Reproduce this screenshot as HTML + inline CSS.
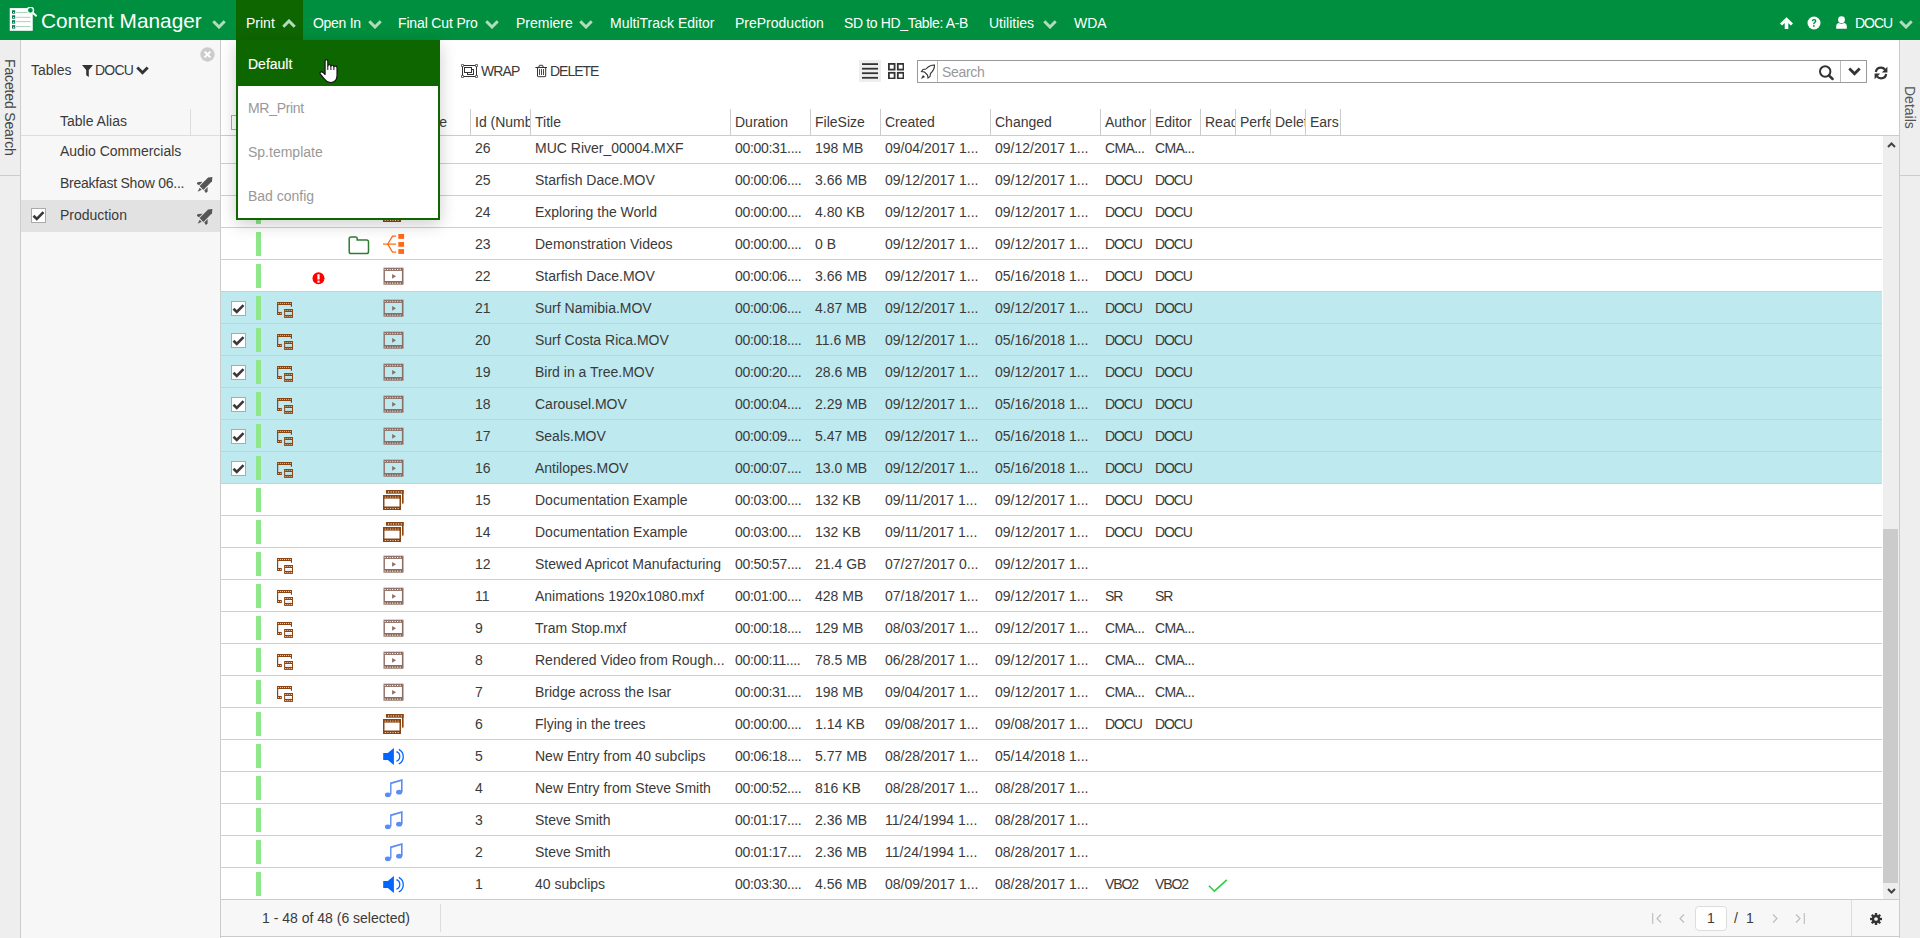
<!DOCTYPE html>
<html><head><meta charset="utf-8">
<style>
*{box-sizing:border-box;margin:0;padding:0}
html,body{width:1920px;height:938px;overflow:hidden;background:#fff}
body{font-family:"Liberation Sans",sans-serif;font-size:14px;color:#3a3a3a;position:relative}
.abs{position:absolute}
#nav{position:absolute;left:0;top:0;width:1920px;height:40px;background:#008f3e;color:#fff}
#nav .it{position:absolute;top:0;height:40px;line-height:46px;font-size:14px;white-space:nowrap}
#nav .chev{position:absolute;top:20px}
#printbg{position:absolute;left:236px;top:0;width:67px;height:40px;background:#0e6600}
#fstrip{position:absolute;left:0;top:40px;width:21px;height:898px;background:#eee;border-right:1px solid #ccc}
#fstrip .line{position:absolute;left:0;top:135px;width:20px;height:1px;background:#ccc}
.vtext{position:absolute;white-space:nowrap;transform-origin:0 0;transform:rotate(90deg);font-size:14px;color:#444}
#panel{position:absolute;left:21px;top:40px;width:200px;height:898px;background:#f7f7f7;border-right:1px solid #ccc}
#dstrip{position:absolute;left:1899px;top:40px;width:21px;height:898px;background:#eee;border-left:1px solid #ccc}
#dstrip .line{position:absolute;left:0;top:135px;width:21px;height:1px;background:#ccc}
#main{position:absolute;left:221px;top:40px;width:1678px;height:898px;background:#fff}
#thead{position:absolute;left:0;top:69px;width:1678px;height:27px;border-bottom:1px solid #ccc}
.hc{position:absolute;top:0;height:26px;line-height:27px;padding-left:4px;border-left:1px solid #ccc;white-space:nowrap;overflow:hidden}
#tbody{position:absolute;left:221px;top:136px;width:1661px;height:763px;overflow:hidden}
.row{position:absolute;left:0;width:1661px;height:32px;border-bottom:1px solid #cfcfcf;background:#fff}
.row.sel{background:#bde9ef}
.row .c{position:absolute;top:0;line-height:32px;white-space:nowrap;overflow:hidden}
.gbar{position:absolute;left:35px;top:4px;width:5px;height:24px;background:#8ee88a}
.cb{position:absolute;left:10px;top:9px;width:15px;height:15px;border:1px solid #aaa;background:#fff}
.cb svg{position:absolute;left:0;top:0}
.ic{position:absolute}
.ic.sub{left:56px;top:10px}
.ic.video{left:162px;top:7px}
.ic.stack{left:162px;top:6px}
.ic.folder{left:127px;top:7.5px}
.ic.share{left:162px;top:6px}
.ic.err{left:90.5px;top:11.5px}
.ic.speaker{left:162px;top:7.7px}
.ic.note{left:163px;top:7px}
.ic.checkg{left:986.6px;top:11px}
#sb{position:absolute;left:1662px;top:96px;width:16px;height:763px;background:#eee}
#thumb{position:absolute;left:0;top:393px;width:15px;height:354px;background:#cbcbcb}
#footer{position:absolute;left:221px;top:899px;width:1678px;height:38px;background:#f7f7f7;border-top:1px solid #ccc;border-bottom:1px solid #ccc}
#dd{position:absolute;left:236px;top:40px;width:204px;height:180px;background:#fff;border:2px solid #0e6600;box-shadow:0 4px 16px rgba(0,0,0,.2)}
#dd .mi{position:absolute;left:10px;white-space:nowrap;color:#999;font-size:14px}
#dd .def{position:absolute;left:0;top:0;width:200px;height:44px;background:#0e6600}
</style></head><body>
<div id="nav">
  <svg class="abs" style="left:9px;top:7px" width="30" height="26" viewBox="0 0 30 26">
    <rect x="0.75" y="1.1" width="23" height="22.7" fill="#fff"/>
    <g fill="#087a55"><rect x="3" y="3.3" width="3.2" height="3.4"/><rect x="3" y="8.3" width="3.2" height="3.4"/><rect x="3" y="13.2" width="3.2" height="3.4"/><rect x="3" y="18.2" width="3.2" height="3.4"/></g>
    <g fill="#fff"><rect x="4" y="5" width="1.2" height="0.8"/><rect x="4" y="10" width="1.2" height="0.8"/><rect x="4" y="14.9" width="1.2" height="0.8"/><rect x="4" y="19.9" width="1.2" height="0.8"/></g>
    <g fill="#a9d6b6"><rect x="7.2" y="5" width="14.4" height="1"/><rect x="7.2" y="9.8" width="14.4" height="1"/><rect x="7.2" y="14.1" width="14.4" height="1"/><rect x="7.2" y="19" width="14.4" height="1"/></g>
    <circle cx="21.4" cy="3.3" r="3.1" fill="#008f3e" stroke="#fff" stroke-width="1.4"/>
    <path d="M23.8 5.8 L27.6 9.2" stroke="#fff" stroke-width="2"/>
  </svg>
  <span class="it" style="left:41px;font-size:20.8px;line-height:42px">Content Manager</span>
  <svg class="chev" style="left:212px;top:20px" width="14" height="9" viewBox="0 0 14 9"><path d="M1.3 1.3 L7 7 L12.7 1.3" fill="none" stroke="#b3dcbd" stroke-width="3"/></svg>
  <div id="printbg"></div>
  <span class="it" style="left:246px">Print</span>
  <svg class="chev" style="left:282px;top:19px" width="14" height="9" viewBox="0 0 14 9"><path d="M1.3 7.7 L7 2 L12.7 7.7" fill="none" stroke="#b3dcbd" stroke-width="3"/></svg>
  <span class="it" style="left:313px;letter-spacing:-0.3px">Open In</span>
  <svg class="chev" style="left:368px;top:20px" width="14" height="9" viewBox="0 0 14 9"><path d="M1.3 1.3 L7 7 L12.7 1.3" fill="none" stroke="#b3dcbd" stroke-width="3"/></svg>
  <span class="it" style="left:398px;letter-spacing:-0.15px">Final Cut Pro</span>
  <svg class="chev" style="left:485px;top:20px" width="14" height="9" viewBox="0 0 14 9"><path d="M1.3 1.3 L7 7 L12.7 1.3" fill="none" stroke="#b3dcbd" stroke-width="3"/></svg>
  <span class="it" style="left:516px">Premiere</span>
  <svg class="chev" style="left:579px;top:20px" width="14" height="9" viewBox="0 0 14 9"><path d="M1.3 1.3 L7 7 L12.7 1.3" fill="none" stroke="#b3dcbd" stroke-width="3"/></svg>
  <span class="it" style="left:610px">MultiTrack Editor</span>
  <span class="it" style="left:735px">PreProduction</span>
  <span class="it" style="left:844px;letter-spacing:-0.35px">SD to HD_Table: A-B</span>
  <span class="it" style="left:989px">Utilities</span>
  <svg class="chev" style="left:1043px;top:20px" width="14" height="9" viewBox="0 0 14 9"><path d="M1.3 1.3 L7 7 L12.7 1.3" fill="none" stroke="#b3dcbd" stroke-width="3"/></svg>
  <span class="it" style="left:1074px">WDA</span>
  <!-- right icons -->
  <svg class="abs" style="left:1779.5px;top:16.5px" width="14" height="14" viewBox="0 0 14 14"><path d="M6.5 0.3 L13 6.6 L10.9 8.6 L8.3 6 V12 H4.7 V6 L2.1 8.6 L0 6.6Z" fill="#fff"/></svg>
  <svg class="abs" style="left:1807px;top:16px" width="14" height="14" viewBox="0 0 14 14"><circle cx="7" cy="7" r="6.5" fill="#fff"/><path d="M4.7 5.2 Q4.8 2.9 7.1 2.9 Q9.4 3 9.4 5 Q9.4 6.3 8 7 Q7.5 7.3 7.5 8.3 H6.1 Q6.1 6.8 7 6.2 Q7.9 5.7 7.8 5 Q7.7 4.3 7 4.3 Q6.3 4.3 6.2 5.3Z" fill="#008f3e"/><rect x="6.1" y="9.2" width="1.5" height="1.6" fill="#008f3e"/></svg>
  <svg class="abs" style="left:1836px;top:16px" width="11" height="13" viewBox="0 0 11 13"><circle cx="5.5" cy="3.7" r="3.4" fill="#fff"/><path d="M0.2 12.7 V10 Q0.2 7.4 2.6 7.1 Q5.5 8.6 8.4 7.1 Q10.8 7.4 10.8 10 V12.7Z" fill="#fff"/></svg>
  <span class="it" style="left:1855px;letter-spacing:-1px">DOCU</span>
  <svg class="chev" style="left:1899px;top:20px" width="14" height="9" viewBox="0 0 14 9"><path d="M1.3 1.3 L7 7 L12.7 1.3" fill="none" stroke="#b3dcbd" stroke-width="3"/></svg>
</div>

<div id="fstrip"><div class="line"></div><span class="vtext" style="left:18px;top:19px;letter-spacing:-0.15px">Faceted Search</span></div>

<div id="panel">
  <svg class="abs" style="left:178.7px;top:6.5px" width="15" height="15" viewBox="0 0 15 15"><circle cx="7.5" cy="7.5" r="7.2" fill="#ccc"/><path d="M4.6 4.6 L10.4 10.4 M10.4 4.6 L4.6 10.4" stroke="#fff" stroke-width="2"/></svg>
  <span class="abs" style="left:10px;top:22px;line-height:16px">Tables</span>
  <svg class="abs" style="left:61px;top:25px" width="11" height="12" viewBox="0 0 11 12"><path d="M0 0 H11 L6.8 5 V12 L4.2 10.3 V5Z" fill="#333"/></svg>
  <span class="abs" style="left:74px;top:22px;line-height:16px;letter-spacing:-0.8px">DOCU</span>
  <svg class="abs" style="left:115px;top:26px" width="13" height="9" viewBox="0 0 13 9"><path d="M1.3 1.5 L6.5 6.7 L11.7 1.5" fill="none" stroke="#333" stroke-width="2.9"/></svg>
  <div class="abs" style="left:0;top:69px;width:199px;height:27px;border-bottom:1px solid #ddd"></div>
  <div class="abs" style="left:169px;top:69px;width:1px;height:26px;background:#ddd"></div>
  <span class="abs" style="left:39px;top:73px;line-height:16px">Table Alias</span>
  <span class="abs" style="left:39px;top:103px;line-height:16px">Audio Commercials</span>
  <span class="abs" style="left:39px;top:135px;line-height:16px;letter-spacing:-0.25px">Breakfast Show 06...</span>
  <svg class="abs rocket" style="left:176px;top:137px" width="16" height="16" viewBox="0 0 16 16"><g fill="#555" transform="translate(4.5 11) rotate(-45) scale(1.12)"><path d="M0 -2.4 H10.8 L13.8 0 L10.8 2.4 H0Z"/><path d="M0.2 -3.3 H4.6 L1.6 -6 H-0.4Z"/><path d="M0.2 3.3 H4.6 L1.6 6 H-0.4Z"/><path d="M-1 -1.3 L-1 1.3 L-4.8 0Z"/></g></svg>
  <div class="abs" style="left:0;top:160px;width:199px;height:32px;background:#e3e2e3"></div>
  <span class="cb" style="left:10px;top:168px"><svg width="13" height="13" viewBox="0 0 13 13"><path d="M1.5 6.8 L4.8 10 L11.5 3.2" fill="none" stroke="#3a3a3a" stroke-width="2.6"/></svg></span>
  <span class="abs" style="left:39px;top:167px;line-height:16px">Production</span>
  <svg class="abs rocket" style="left:176px;top:169px" width="16" height="16" viewBox="0 0 16 16"><g fill="#555" transform="translate(4.5 11) rotate(-45) scale(1.12)"><path d="M0 -2.4 H10.8 L13.8 0 L10.8 2.4 H0Z"/><path d="M0.2 -3.3 H4.6 L1.6 -6 H-0.4Z"/><path d="M0.2 3.3 H4.6 L1.6 6 H-0.4Z"/><path d="M-1 -1.3 L-1 1.3 L-4.8 0Z"/></g></svg>
</div>

<div id="main">
  <!-- toolbar -->
  <svg class="abs" style="left:240px;top:24px" width="17" height="14" viewBox="0 0 17 14"><g fill="#fff" stroke="#333" stroke-width="1"><rect x="1.5" y="1.5" width="14" height="11" fill="none"/><rect x="6.5" y="5.5" width="6" height="5"/><rect x="3.5" y="3.5" width="7" height="5"/><circle cx="1.5" cy="1.5" r="1.2"/><circle cx="15.5" cy="1.5" r="1.2"/><circle cx="1.5" cy="12.5" r="1.2"/><circle cx="15.5" cy="12.5" r="1.2"/></g></svg>
  <span class="abs" style="left:260px;top:23px;line-height:16px;letter-spacing:-0.9px">WRAP</span>
  <svg class="abs" style="left:314px;top:24px" width="13" height="14" viewBox="0 0 13 14"><g fill="none" stroke="#333"><path d="M0.4 3.5 H11.9" stroke-width="1.1"/><path d="M4 3.5 V2 Q4 1.3 4.7 1.3 H7.3 Q8 1.3 8 2 V3.5" stroke-width="1"/><path d="M2.5 3.5 V12 Q2.5 12.7 3.2 12.7 H10 Q10.7 12.7 10.7 12 V3.5" stroke-width="1"/><path d="M4.5 5.5 V10.6 M6.5 5.5 V10.6 M8.5 5.5 V10.6" stroke-width="0.9" stroke-linecap="round"/></g></svg>
  <span class="abs" style="left:329px;top:23px;line-height:16px;letter-spacing:-1px">DELETE</span>
  <div class="abs" style="left:638px;top:20px;width:22px;height:22px;background:#eee"></div>
  <svg class="abs" style="left:641px;top:23px" width="16" height="16" viewBox="0 0 16 16"><g fill="#333"><rect x="0" y="0.2" width="16" height="1.8"/><rect x="0" y="4.8" width="16" height="1.8"/><rect x="0" y="9.3" width="16" height="1.8"/><rect x="0" y="13.9" width="16" height="1.8"/></g></svg>
  <svg class="abs" style="left:667px;top:22.8px" width="16.4" height="16.4" viewBox="0 0 16.4 16.4"><g fill="none" stroke="#333" stroke-width="1.8"><rect x="0.9" y="0.9" width="5.7" height="5.7"/><rect x="9.8" y="0.9" width="5.7" height="5.7"/><rect x="0.9" y="9.8" width="5.7" height="5.7"/><rect x="9.8" y="9.8" width="5.7" height="5.7"/></g></svg>
  <div class="abs" style="left:696px;top:20px;width:950px;height:23px;border:1px solid #999;background:#fff"></div>
  <div class="abs" style="left:716px;top:21px;width:1px;height:21px;background:#bbb"></div>
  <svg class="abs" style="left:699px;top:24px" width="16" height="16" viewBox="0 0 16 16"><g fill="none" stroke="#333" stroke-width="1.1"><path d="M14.5 1 Q9.5 1 6 5 L3 5.5 L1.5 7.5 L4.5 8 L7.5 11 L8 14 L10 12.5 L10.5 9.5 Q14.5 6 14.5 1Z"/></g><path d="M3 11 L1 15 L5 13Z" fill="#333"/></svg>
  <span class="abs" style="left:721px;top:24px;line-height:16px;color:#999;letter-spacing:-0.3px">Search</span>
  <svg class="abs" style="left:1597px;top:25px" width="17" height="16" viewBox="0 0 17 16"><circle cx="7.2" cy="6.5" r="5.2" fill="none" stroke="#333" stroke-width="2"/><path d="M10.9 10.4 L14.6 14" stroke="#333" stroke-width="2.5" stroke-linecap="round"/></svg>
  <div class="abs" style="left:1619px;top:21px;width:1px;height:21px;background:#bbb"></div>
  <svg class="abs" style="left:1626.5px;top:27px" width="13" height="10" viewBox="0 0 13 10"><path d="M1.3 1.5 L6.5 6.8 L11.7 1.5" fill="none" stroke="#333" stroke-width="2.8"/></svg>
  <svg class="abs" style="left:1653px;top:26px" width="14" height="14" viewBox="0 0 14 14"><g fill="none" stroke="#333" stroke-width="2.2"><path d="M1.8 6 Q2.6 1.6 7 1.6 Q9.6 1.6 11 3.6"/><path d="M12.2 8 Q11.4 12.3 7 12.3 Q4.4 12.3 3 10.3"/></g><path d="M13.4 0.8 V6.5 H7.8Z M0.6 13.2 V7.5 H6.2Z" fill="#333"/></svg>

  <div id="thead">
    <span class="abs" style="left:10px;top:6px;width:15px;height:15px;border:1px solid #aaa;background:#fff"></span>
    <div class="abs" style="left:26px;top:2px;width:1px;height:23px;background:#ddd"></div>
    <span class="hc" style="left:186px;width:40px;border:none;text-align:right;padding:0">Type</span>
    <span class="hc" style="left:249px;width:60px">Id (Numb</span><span class="hc" style="left:309px;width:200px">Title</span><span class="hc" style="left:509px;width:80px">Duration</span><span class="hc" style="left:589px;width:70px">FileSize</span><span class="hc" style="left:659px;width:110px">Created</span><span class="hc" style="left:769px;width:110px">Changed</span><span class="hc" style="left:879px;width:50px">Author</span><span class="hc" style="left:929px;width:50px">Editor</span><span class="hc" style="left:979px;width:35px">Read</span><span class="hc" style="left:1014px;width:35px">Perfe</span><span class="hc" style="left:1049px;width:35px">Delet</span><span class="hc" style="left:1084px;width:35px">Ears</span>
    <div class="abs" style="left:1119px;top:0;width:1px;height:26px;background:#ccc"></div>
  </div>
  <div id="sb"><svg class="abs" style="left:3.5px;top:6px" width="9" height="6" viewBox="0 0 9 6"><path d="M1 5 L4.5 1.5 L8 5" fill="none" stroke="#444" stroke-width="2"/></svg>
  <div id="thumb"></div>
  <svg class="abs" style="left:3.5px;top:752px" width="9" height="6" viewBox="0 0 9 6"><path d="M1 1 L4.5 4.5 L8 1" fill="none" stroke="#444" stroke-width="2"/></svg></div>
</div>

<div id="tbody">
<div class="row" style="top:-4px"><span class="gbar"></span><svg class="ic sub" width="16" height="16" viewBox="0 0 16 16"><g fill="#8b4513"><rect x="0" y="0" width="15" height="3"/><rect x="0" y="0" width="1.2" height="13"/><rect x="13.9" y="0" width="1.1" height="4.8"/><rect x="0" y="10" width="4.8" height="3"/><rect x="7.1" y="7" width="8.9" height="8.9"/></g><circle cx="1.40" cy="1.50" r="0.5" fill="#fff"/><circle cx="3.40" cy="1.50" r="0.5" fill="#fff"/><circle cx="5.40" cy="1.50" r="0.5" fill="#fff"/><circle cx="7.40" cy="1.50" r="0.5" fill="#fff"/><circle cx="9.40" cy="1.50" r="0.5" fill="#fff"/><circle cx="11.40" cy="1.50" r="0.5" fill="#fff"/><circle cx="13.40" cy="1.50" r="0.5" fill="#fff"/><circle cx="1.40" cy="11.50" r="0.5" fill="#fff"/><circle cx="3.40" cy="11.50" r="0.5" fill="#fff"/><circle cx="8.80" cy="8.50" r="0.5" fill="#fff"/><circle cx="10.80" cy="8.50" r="0.5" fill="#fff"/><circle cx="12.80" cy="8.50" r="0.5" fill="#fff"/><circle cx="14.60" cy="8.50" r="0.5" fill="#fff"/><circle cx="8.80" cy="14.40" r="0.5" fill="#fff"/><circle cx="10.80" cy="14.40" r="0.5" fill="#fff"/><circle cx="12.80" cy="14.40" r="0.5" fill="#fff"/><circle cx="14.60" cy="14.40" r="0.5" fill="#fff"/><rect x="8.1" y="10" width="6.9" height="2.9" fill="#fff"/><rect x="8.6" y="11.2" width="5.9" height="0.5" fill="#d9b9a3" opacity="0.6"/></svg><svg class="ic video" width="21" height="18" viewBox="0 0 21 18"><rect x="0.5" y="0.7" width="20" height="17" fill="#8d6e63"/><rect x="1.9" y="3.9" width="17" height="10.1" fill="#fff"/><circle cx="2.10" cy="2.40" r="0.6" fill="#fff"/><circle cx="4.62" cy="2.40" r="0.6" fill="#fff"/><circle cx="7.14" cy="2.40" r="0.6" fill="#fff"/><circle cx="9.66" cy="2.40" r="0.6" fill="#fff"/><circle cx="12.18" cy="2.40" r="0.6" fill="#fff"/><circle cx="14.70" cy="2.40" r="0.6" fill="#fff"/><circle cx="17.22" cy="2.40" r="0.6" fill="#fff"/><circle cx="2.10" cy="16.20" r="0.6" fill="#fff"/><circle cx="4.62" cy="16.20" r="0.6" fill="#fff"/><circle cx="7.14" cy="16.20" r="0.6" fill="#fff"/><circle cx="9.66" cy="16.20" r="0.6" fill="#fff"/><circle cx="12.18" cy="16.20" r="0.6" fill="#fff"/><circle cx="14.70" cy="16.20" r="0.6" fill="#fff"/><circle cx="17.22" cy="16.20" r="0.6" fill="#fff"/><path d="M9.1 7 L13 9.35 L9.1 11.7Z" fill="#8d6e63"/></svg><span class="c" style="left:254px;width:55px;">26</span><span class="c" style="left:314px;width:195px;">MUC River_00004.MXF</span><span class="c" style="left:514px;width:75px;letter-spacing:-0.3px;">00:00:31....</span><span class="c" style="left:594px;width:65px;">198 MB</span><span class="c" style="left:664px;width:105px;">09/04/2017 1...</span><span class="c" style="left:774px;width:105px;">09/12/2017 1...</span><span class="c" style="left:884px;width:45px;letter-spacing:-0.6px;">CMA...</span><span class="c" style="left:934px;width:45px;letter-spacing:-0.6px;">CMA...</span></div>
<div class="row" style="top:28px"><span class="gbar"></span><svg class="ic sub" width="16" height="16" viewBox="0 0 16 16"><g fill="#8b4513"><rect x="0" y="0" width="15" height="3"/><rect x="0" y="0" width="1.2" height="13"/><rect x="13.9" y="0" width="1.1" height="4.8"/><rect x="0" y="10" width="4.8" height="3"/><rect x="7.1" y="7" width="8.9" height="8.9"/></g><circle cx="1.40" cy="1.50" r="0.5" fill="#fff"/><circle cx="3.40" cy="1.50" r="0.5" fill="#fff"/><circle cx="5.40" cy="1.50" r="0.5" fill="#fff"/><circle cx="7.40" cy="1.50" r="0.5" fill="#fff"/><circle cx="9.40" cy="1.50" r="0.5" fill="#fff"/><circle cx="11.40" cy="1.50" r="0.5" fill="#fff"/><circle cx="13.40" cy="1.50" r="0.5" fill="#fff"/><circle cx="1.40" cy="11.50" r="0.5" fill="#fff"/><circle cx="3.40" cy="11.50" r="0.5" fill="#fff"/><circle cx="8.80" cy="8.50" r="0.5" fill="#fff"/><circle cx="10.80" cy="8.50" r="0.5" fill="#fff"/><circle cx="12.80" cy="8.50" r="0.5" fill="#fff"/><circle cx="14.60" cy="8.50" r="0.5" fill="#fff"/><circle cx="8.80" cy="14.40" r="0.5" fill="#fff"/><circle cx="10.80" cy="14.40" r="0.5" fill="#fff"/><circle cx="12.80" cy="14.40" r="0.5" fill="#fff"/><circle cx="14.60" cy="14.40" r="0.5" fill="#fff"/><rect x="8.1" y="10" width="6.9" height="2.9" fill="#fff"/><rect x="8.6" y="11.2" width="5.9" height="0.5" fill="#d9b9a3" opacity="0.6"/></svg><svg class="ic video" width="21" height="18" viewBox="0 0 21 18"><rect x="0.5" y="0.7" width="20" height="17" fill="#8d6e63"/><rect x="1.9" y="3.9" width="17" height="10.1" fill="#fff"/><circle cx="2.10" cy="2.40" r="0.6" fill="#fff"/><circle cx="4.62" cy="2.40" r="0.6" fill="#fff"/><circle cx="7.14" cy="2.40" r="0.6" fill="#fff"/><circle cx="9.66" cy="2.40" r="0.6" fill="#fff"/><circle cx="12.18" cy="2.40" r="0.6" fill="#fff"/><circle cx="14.70" cy="2.40" r="0.6" fill="#fff"/><circle cx="17.22" cy="2.40" r="0.6" fill="#fff"/><circle cx="2.10" cy="16.20" r="0.6" fill="#fff"/><circle cx="4.62" cy="16.20" r="0.6" fill="#fff"/><circle cx="7.14" cy="16.20" r="0.6" fill="#fff"/><circle cx="9.66" cy="16.20" r="0.6" fill="#fff"/><circle cx="12.18" cy="16.20" r="0.6" fill="#fff"/><circle cx="14.70" cy="16.20" r="0.6" fill="#fff"/><circle cx="17.22" cy="16.20" r="0.6" fill="#fff"/><path d="M9.1 7 L13 9.35 L9.1 11.7Z" fill="#8d6e63"/></svg><span class="c" style="left:254px;width:55px;">25</span><span class="c" style="left:314px;width:195px;">Starfish Dace.MOV</span><span class="c" style="left:514px;width:75px;letter-spacing:-0.3px;">00:00:06....</span><span class="c" style="left:594px;width:65px;">3.66 MB</span><span class="c" style="left:664px;width:105px;">09/12/2017 1...</span><span class="c" style="left:774px;width:105px;">09/12/2017 1...</span><span class="c" style="left:884px;width:45px;letter-spacing:-1.1px;">DOCU</span><span class="c" style="left:934px;width:45px;letter-spacing:-1.1px;">DOCU</span></div>
<div class="row" style="top:60px"><span class="gbar"></span><svg class="ic stack" width="21" height="21" viewBox="0 0 21 21"><g fill="#8b4513"><rect x="3" y="0" width="17.6" height="3.7"/><rect x="19" y="0" width="1.6" height="13.6"/><rect x="0" y="5" width="18" height="15"/></g><circle cx="5.50" cy="1.90" r="0.55" fill="#fff"/><circle cx="8.06" cy="1.90" r="0.55" fill="#fff"/><circle cx="10.62" cy="1.90" r="0.55" fill="#fff"/><circle cx="13.18" cy="1.90" r="0.55" fill="#fff"/><circle cx="15.74" cy="1.90" r="0.55" fill="#fff"/><circle cx="18.30" cy="1.90" r="0.55" fill="#fff"/><circle cx="2.30" cy="7.00" r="0.55" fill="#fff"/><circle cx="4.86" cy="7.00" r="0.55" fill="#fff"/><circle cx="7.42" cy="7.00" r="0.55" fill="#fff"/><circle cx="9.98" cy="7.00" r="0.55" fill="#fff"/><circle cx="12.54" cy="7.00" r="0.55" fill="#fff"/><circle cx="15.10" cy="7.00" r="0.55" fill="#fff"/><circle cx="2.30" cy="18.50" r="0.55" fill="#fff"/><circle cx="4.86" cy="18.50" r="0.55" fill="#fff"/><circle cx="7.42" cy="18.50" r="0.55" fill="#fff"/><circle cx="9.98" cy="18.50" r="0.55" fill="#fff"/><circle cx="12.54" cy="18.50" r="0.55" fill="#fff"/><circle cx="15.10" cy="18.50" r="0.55" fill="#fff"/><rect x="1.5" y="8.6" width="15" height="7.9" fill="#fff"/></svg><span class="c" style="left:254px;width:55px;">24</span><span class="c" style="left:314px;width:195px;">Exploring the World</span><span class="c" style="left:514px;width:75px;letter-spacing:-0.3px;">00:00:00....</span><span class="c" style="left:594px;width:65px;">4.80 KB</span><span class="c" style="left:664px;width:105px;">09/12/2017 1...</span><span class="c" style="left:774px;width:105px;">09/12/2017 1...</span><span class="c" style="left:884px;width:45px;letter-spacing:-1.1px;">DOCU</span><span class="c" style="left:934px;width:45px;letter-spacing:-1.1px;">DOCU</span></div>
<div class="row" style="top:92px"><span class="gbar"></span><svg class="ic folder" width="22" height="19" viewBox="0 0 22 19"><path d="M3 1 H7.5 Q9.2 1 9.2 2.6 V4 H18.6 Q20.5 4 20.5 5.9 V15.8 Q20.5 17.6 18.6 17.6 H3 Q1.2 17.6 1.2 15.8 V2.8 Q1.2 1 3 1Z" fill="none" stroke="#2e7d32" stroke-width="1.5"/></svg><svg class="ic share" width="22" height="21" viewBox="0 0 22 21"><g fill="#ff6a1a"><rect x="15.3" y="0" width="5.8" height="4.9"/><rect x="15.3" y="8" width="5.8" height="4.8"/><rect x="15.3" y="15.1" width="5.8" height="4.8"/></g><path d="M0 10.2 H13.1 M13.1 2.2 H9.5 L4.7 10.2 L9.5 18.2 H13.1" fill="none" stroke="#ff6a1a" stroke-width="1.3"/></svg><span class="c" style="left:254px;width:55px;">23</span><span class="c" style="left:314px;width:195px;">Demonstration Videos</span><span class="c" style="left:514px;width:75px;letter-spacing:-0.3px;">00:00:00....</span><span class="c" style="left:594px;width:65px;">0 B</span><span class="c" style="left:664px;width:105px;">09/12/2017 1...</span><span class="c" style="left:774px;width:105px;">09/12/2017 1...</span><span class="c" style="left:884px;width:45px;letter-spacing:-1.1px;">DOCU</span><span class="c" style="left:934px;width:45px;letter-spacing:-1.1px;">DOCU</span></div>
<div class="row" style="top:124px"><span class="gbar"></span><svg class="ic err" width="13" height="13" viewBox="0 0 13 13"><circle cx="6.5" cy="6.3" r="6" fill="#f00"/><rect x="5.4" y="2.3" width="2.2" height="5.2" fill="#fff"/><rect x="5.4" y="8.6" width="2.2" height="2" fill="#fff"/></svg><svg class="ic video" width="21" height="18" viewBox="0 0 21 18"><rect x="0.5" y="0.7" width="20" height="17" fill="#8d6e63"/><rect x="1.9" y="3.9" width="17" height="10.1" fill="#fff"/><circle cx="2.10" cy="2.40" r="0.6" fill="#fff"/><circle cx="4.62" cy="2.40" r="0.6" fill="#fff"/><circle cx="7.14" cy="2.40" r="0.6" fill="#fff"/><circle cx="9.66" cy="2.40" r="0.6" fill="#fff"/><circle cx="12.18" cy="2.40" r="0.6" fill="#fff"/><circle cx="14.70" cy="2.40" r="0.6" fill="#fff"/><circle cx="17.22" cy="2.40" r="0.6" fill="#fff"/><circle cx="2.10" cy="16.20" r="0.6" fill="#fff"/><circle cx="4.62" cy="16.20" r="0.6" fill="#fff"/><circle cx="7.14" cy="16.20" r="0.6" fill="#fff"/><circle cx="9.66" cy="16.20" r="0.6" fill="#fff"/><circle cx="12.18" cy="16.20" r="0.6" fill="#fff"/><circle cx="14.70" cy="16.20" r="0.6" fill="#fff"/><circle cx="17.22" cy="16.20" r="0.6" fill="#fff"/><path d="M9.1 7 L13 9.35 L9.1 11.7Z" fill="#8d6e63"/></svg><span class="c" style="left:254px;width:55px;">22</span><span class="c" style="left:314px;width:195px;">Starfish Dace.MOV</span><span class="c" style="left:514px;width:75px;letter-spacing:-0.3px;">00:00:06....</span><span class="c" style="left:594px;width:65px;">3.66 MB</span><span class="c" style="left:664px;width:105px;">09/12/2017 1...</span><span class="c" style="left:774px;width:105px;">05/16/2018 1...</span><span class="c" style="left:884px;width:45px;letter-spacing:-1.1px;">DOCU</span><span class="c" style="left:934px;width:45px;letter-spacing:-1.1px;">DOCU</span></div>
<div class="row sel" style="top:156px"><span class="cb"><svg width="13" height="13" viewBox="0 0 13 13"><path d="M1.5 6.8 L4.8 10 L11.5 3.2" fill="none" stroke="#3a3a3a" stroke-width="2.6"/></svg></span><span class="gbar"></span><svg class="ic sub" width="16" height="16" viewBox="0 0 16 16"><g fill="#8b4513"><rect x="0" y="0" width="15" height="3"/><rect x="0" y="0" width="1.2" height="13"/><rect x="13.9" y="0" width="1.1" height="4.8"/><rect x="0" y="10" width="4.8" height="3"/><rect x="7.1" y="7" width="8.9" height="8.9"/></g><circle cx="1.40" cy="1.50" r="0.5" fill="#bde9ef"/><circle cx="3.40" cy="1.50" r="0.5" fill="#bde9ef"/><circle cx="5.40" cy="1.50" r="0.5" fill="#bde9ef"/><circle cx="7.40" cy="1.50" r="0.5" fill="#bde9ef"/><circle cx="9.40" cy="1.50" r="0.5" fill="#bde9ef"/><circle cx="11.40" cy="1.50" r="0.5" fill="#bde9ef"/><circle cx="13.40" cy="1.50" r="0.5" fill="#bde9ef"/><circle cx="1.40" cy="11.50" r="0.5" fill="#bde9ef"/><circle cx="3.40" cy="11.50" r="0.5" fill="#bde9ef"/><circle cx="8.80" cy="8.50" r="0.5" fill="#bde9ef"/><circle cx="10.80" cy="8.50" r="0.5" fill="#bde9ef"/><circle cx="12.80" cy="8.50" r="0.5" fill="#bde9ef"/><circle cx="14.60" cy="8.50" r="0.5" fill="#bde9ef"/><circle cx="8.80" cy="14.40" r="0.5" fill="#bde9ef"/><circle cx="10.80" cy="14.40" r="0.5" fill="#bde9ef"/><circle cx="12.80" cy="14.40" r="0.5" fill="#bde9ef"/><circle cx="14.60" cy="14.40" r="0.5" fill="#bde9ef"/><rect x="8.1" y="10" width="6.9" height="2.9" fill="#bde9ef"/><rect x="8.6" y="11.2" width="5.9" height="0.5" fill="#d9b9a3" opacity="0.6"/></svg><svg class="ic video" width="21" height="18" viewBox="0 0 21 18"><rect x="0.5" y="0.7" width="20" height="17" fill="#8d6e63"/><rect x="1.9" y="3.9" width="17" height="10.1" fill="#bde9ef"/><circle cx="2.10" cy="2.40" r="0.6" fill="#bde9ef"/><circle cx="4.62" cy="2.40" r="0.6" fill="#bde9ef"/><circle cx="7.14" cy="2.40" r="0.6" fill="#bde9ef"/><circle cx="9.66" cy="2.40" r="0.6" fill="#bde9ef"/><circle cx="12.18" cy="2.40" r="0.6" fill="#bde9ef"/><circle cx="14.70" cy="2.40" r="0.6" fill="#bde9ef"/><circle cx="17.22" cy="2.40" r="0.6" fill="#bde9ef"/><circle cx="2.10" cy="16.20" r="0.6" fill="#bde9ef"/><circle cx="4.62" cy="16.20" r="0.6" fill="#bde9ef"/><circle cx="7.14" cy="16.20" r="0.6" fill="#bde9ef"/><circle cx="9.66" cy="16.20" r="0.6" fill="#bde9ef"/><circle cx="12.18" cy="16.20" r="0.6" fill="#bde9ef"/><circle cx="14.70" cy="16.20" r="0.6" fill="#bde9ef"/><circle cx="17.22" cy="16.20" r="0.6" fill="#bde9ef"/><path d="M9.1 7 L13 9.35 L9.1 11.7Z" fill="#8d6e63"/></svg><span class="c" style="left:254px;width:55px;">21</span><span class="c" style="left:314px;width:195px;">Surf Namibia.MOV</span><span class="c" style="left:514px;width:75px;letter-spacing:-0.3px;">00:00:06....</span><span class="c" style="left:594px;width:65px;">4.87 MB</span><span class="c" style="left:664px;width:105px;">09/12/2017 1...</span><span class="c" style="left:774px;width:105px;">09/12/2017 1...</span><span class="c" style="left:884px;width:45px;letter-spacing:-1.1px;">DOCU</span><span class="c" style="left:934px;width:45px;letter-spacing:-1.1px;">DOCU</span></div>
<div class="row sel" style="top:188px"><span class="cb"><svg width="13" height="13" viewBox="0 0 13 13"><path d="M1.5 6.8 L4.8 10 L11.5 3.2" fill="none" stroke="#3a3a3a" stroke-width="2.6"/></svg></span><span class="gbar"></span><svg class="ic sub" width="16" height="16" viewBox="0 0 16 16"><g fill="#8b4513"><rect x="0" y="0" width="15" height="3"/><rect x="0" y="0" width="1.2" height="13"/><rect x="13.9" y="0" width="1.1" height="4.8"/><rect x="0" y="10" width="4.8" height="3"/><rect x="7.1" y="7" width="8.9" height="8.9"/></g><circle cx="1.40" cy="1.50" r="0.5" fill="#bde9ef"/><circle cx="3.40" cy="1.50" r="0.5" fill="#bde9ef"/><circle cx="5.40" cy="1.50" r="0.5" fill="#bde9ef"/><circle cx="7.40" cy="1.50" r="0.5" fill="#bde9ef"/><circle cx="9.40" cy="1.50" r="0.5" fill="#bde9ef"/><circle cx="11.40" cy="1.50" r="0.5" fill="#bde9ef"/><circle cx="13.40" cy="1.50" r="0.5" fill="#bde9ef"/><circle cx="1.40" cy="11.50" r="0.5" fill="#bde9ef"/><circle cx="3.40" cy="11.50" r="0.5" fill="#bde9ef"/><circle cx="8.80" cy="8.50" r="0.5" fill="#bde9ef"/><circle cx="10.80" cy="8.50" r="0.5" fill="#bde9ef"/><circle cx="12.80" cy="8.50" r="0.5" fill="#bde9ef"/><circle cx="14.60" cy="8.50" r="0.5" fill="#bde9ef"/><circle cx="8.80" cy="14.40" r="0.5" fill="#bde9ef"/><circle cx="10.80" cy="14.40" r="0.5" fill="#bde9ef"/><circle cx="12.80" cy="14.40" r="0.5" fill="#bde9ef"/><circle cx="14.60" cy="14.40" r="0.5" fill="#bde9ef"/><rect x="8.1" y="10" width="6.9" height="2.9" fill="#bde9ef"/><rect x="8.6" y="11.2" width="5.9" height="0.5" fill="#d9b9a3" opacity="0.6"/></svg><svg class="ic video" width="21" height="18" viewBox="0 0 21 18"><rect x="0.5" y="0.7" width="20" height="17" fill="#8d6e63"/><rect x="1.9" y="3.9" width="17" height="10.1" fill="#bde9ef"/><circle cx="2.10" cy="2.40" r="0.6" fill="#bde9ef"/><circle cx="4.62" cy="2.40" r="0.6" fill="#bde9ef"/><circle cx="7.14" cy="2.40" r="0.6" fill="#bde9ef"/><circle cx="9.66" cy="2.40" r="0.6" fill="#bde9ef"/><circle cx="12.18" cy="2.40" r="0.6" fill="#bde9ef"/><circle cx="14.70" cy="2.40" r="0.6" fill="#bde9ef"/><circle cx="17.22" cy="2.40" r="0.6" fill="#bde9ef"/><circle cx="2.10" cy="16.20" r="0.6" fill="#bde9ef"/><circle cx="4.62" cy="16.20" r="0.6" fill="#bde9ef"/><circle cx="7.14" cy="16.20" r="0.6" fill="#bde9ef"/><circle cx="9.66" cy="16.20" r="0.6" fill="#bde9ef"/><circle cx="12.18" cy="16.20" r="0.6" fill="#bde9ef"/><circle cx="14.70" cy="16.20" r="0.6" fill="#bde9ef"/><circle cx="17.22" cy="16.20" r="0.6" fill="#bde9ef"/><path d="M9.1 7 L13 9.35 L9.1 11.7Z" fill="#8d6e63"/></svg><span class="c" style="left:254px;width:55px;">20</span><span class="c" style="left:314px;width:195px;">Surf Costa Rica.MOV</span><span class="c" style="left:514px;width:75px;letter-spacing:-0.3px;">00:00:18....</span><span class="c" style="left:594px;width:65px;">11.6 MB</span><span class="c" style="left:664px;width:105px;">09/12/2017 1...</span><span class="c" style="left:774px;width:105px;">05/16/2018 1...</span><span class="c" style="left:884px;width:45px;letter-spacing:-1.1px;">DOCU</span><span class="c" style="left:934px;width:45px;letter-spacing:-1.1px;">DOCU</span></div>
<div class="row sel" style="top:220px"><span class="cb"><svg width="13" height="13" viewBox="0 0 13 13"><path d="M1.5 6.8 L4.8 10 L11.5 3.2" fill="none" stroke="#3a3a3a" stroke-width="2.6"/></svg></span><span class="gbar"></span><svg class="ic sub" width="16" height="16" viewBox="0 0 16 16"><g fill="#8b4513"><rect x="0" y="0" width="15" height="3"/><rect x="0" y="0" width="1.2" height="13"/><rect x="13.9" y="0" width="1.1" height="4.8"/><rect x="0" y="10" width="4.8" height="3"/><rect x="7.1" y="7" width="8.9" height="8.9"/></g><circle cx="1.40" cy="1.50" r="0.5" fill="#bde9ef"/><circle cx="3.40" cy="1.50" r="0.5" fill="#bde9ef"/><circle cx="5.40" cy="1.50" r="0.5" fill="#bde9ef"/><circle cx="7.40" cy="1.50" r="0.5" fill="#bde9ef"/><circle cx="9.40" cy="1.50" r="0.5" fill="#bde9ef"/><circle cx="11.40" cy="1.50" r="0.5" fill="#bde9ef"/><circle cx="13.40" cy="1.50" r="0.5" fill="#bde9ef"/><circle cx="1.40" cy="11.50" r="0.5" fill="#bde9ef"/><circle cx="3.40" cy="11.50" r="0.5" fill="#bde9ef"/><circle cx="8.80" cy="8.50" r="0.5" fill="#bde9ef"/><circle cx="10.80" cy="8.50" r="0.5" fill="#bde9ef"/><circle cx="12.80" cy="8.50" r="0.5" fill="#bde9ef"/><circle cx="14.60" cy="8.50" r="0.5" fill="#bde9ef"/><circle cx="8.80" cy="14.40" r="0.5" fill="#bde9ef"/><circle cx="10.80" cy="14.40" r="0.5" fill="#bde9ef"/><circle cx="12.80" cy="14.40" r="0.5" fill="#bde9ef"/><circle cx="14.60" cy="14.40" r="0.5" fill="#bde9ef"/><rect x="8.1" y="10" width="6.9" height="2.9" fill="#bde9ef"/><rect x="8.6" y="11.2" width="5.9" height="0.5" fill="#d9b9a3" opacity="0.6"/></svg><svg class="ic video" width="21" height="18" viewBox="0 0 21 18"><rect x="0.5" y="0.7" width="20" height="17" fill="#8d6e63"/><rect x="1.9" y="3.9" width="17" height="10.1" fill="#bde9ef"/><circle cx="2.10" cy="2.40" r="0.6" fill="#bde9ef"/><circle cx="4.62" cy="2.40" r="0.6" fill="#bde9ef"/><circle cx="7.14" cy="2.40" r="0.6" fill="#bde9ef"/><circle cx="9.66" cy="2.40" r="0.6" fill="#bde9ef"/><circle cx="12.18" cy="2.40" r="0.6" fill="#bde9ef"/><circle cx="14.70" cy="2.40" r="0.6" fill="#bde9ef"/><circle cx="17.22" cy="2.40" r="0.6" fill="#bde9ef"/><circle cx="2.10" cy="16.20" r="0.6" fill="#bde9ef"/><circle cx="4.62" cy="16.20" r="0.6" fill="#bde9ef"/><circle cx="7.14" cy="16.20" r="0.6" fill="#bde9ef"/><circle cx="9.66" cy="16.20" r="0.6" fill="#bde9ef"/><circle cx="12.18" cy="16.20" r="0.6" fill="#bde9ef"/><circle cx="14.70" cy="16.20" r="0.6" fill="#bde9ef"/><circle cx="17.22" cy="16.20" r="0.6" fill="#bde9ef"/><path d="M9.1 7 L13 9.35 L9.1 11.7Z" fill="#8d6e63"/></svg><span class="c" style="left:254px;width:55px;">19</span><span class="c" style="left:314px;width:195px;">Bird in a Tree.MOV</span><span class="c" style="left:514px;width:75px;letter-spacing:-0.3px;">00:00:20....</span><span class="c" style="left:594px;width:65px;">28.6 MB</span><span class="c" style="left:664px;width:105px;">09/12/2017 1...</span><span class="c" style="left:774px;width:105px;">09/12/2017 1...</span><span class="c" style="left:884px;width:45px;letter-spacing:-1.1px;">DOCU</span><span class="c" style="left:934px;width:45px;letter-spacing:-1.1px;">DOCU</span></div>
<div class="row sel" style="top:252px"><span class="cb"><svg width="13" height="13" viewBox="0 0 13 13"><path d="M1.5 6.8 L4.8 10 L11.5 3.2" fill="none" stroke="#3a3a3a" stroke-width="2.6"/></svg></span><span class="gbar"></span><svg class="ic sub" width="16" height="16" viewBox="0 0 16 16"><g fill="#8b4513"><rect x="0" y="0" width="15" height="3"/><rect x="0" y="0" width="1.2" height="13"/><rect x="13.9" y="0" width="1.1" height="4.8"/><rect x="0" y="10" width="4.8" height="3"/><rect x="7.1" y="7" width="8.9" height="8.9"/></g><circle cx="1.40" cy="1.50" r="0.5" fill="#bde9ef"/><circle cx="3.40" cy="1.50" r="0.5" fill="#bde9ef"/><circle cx="5.40" cy="1.50" r="0.5" fill="#bde9ef"/><circle cx="7.40" cy="1.50" r="0.5" fill="#bde9ef"/><circle cx="9.40" cy="1.50" r="0.5" fill="#bde9ef"/><circle cx="11.40" cy="1.50" r="0.5" fill="#bde9ef"/><circle cx="13.40" cy="1.50" r="0.5" fill="#bde9ef"/><circle cx="1.40" cy="11.50" r="0.5" fill="#bde9ef"/><circle cx="3.40" cy="11.50" r="0.5" fill="#bde9ef"/><circle cx="8.80" cy="8.50" r="0.5" fill="#bde9ef"/><circle cx="10.80" cy="8.50" r="0.5" fill="#bde9ef"/><circle cx="12.80" cy="8.50" r="0.5" fill="#bde9ef"/><circle cx="14.60" cy="8.50" r="0.5" fill="#bde9ef"/><circle cx="8.80" cy="14.40" r="0.5" fill="#bde9ef"/><circle cx="10.80" cy="14.40" r="0.5" fill="#bde9ef"/><circle cx="12.80" cy="14.40" r="0.5" fill="#bde9ef"/><circle cx="14.60" cy="14.40" r="0.5" fill="#bde9ef"/><rect x="8.1" y="10" width="6.9" height="2.9" fill="#bde9ef"/><rect x="8.6" y="11.2" width="5.9" height="0.5" fill="#d9b9a3" opacity="0.6"/></svg><svg class="ic video" width="21" height="18" viewBox="0 0 21 18"><rect x="0.5" y="0.7" width="20" height="17" fill="#8d6e63"/><rect x="1.9" y="3.9" width="17" height="10.1" fill="#bde9ef"/><circle cx="2.10" cy="2.40" r="0.6" fill="#bde9ef"/><circle cx="4.62" cy="2.40" r="0.6" fill="#bde9ef"/><circle cx="7.14" cy="2.40" r="0.6" fill="#bde9ef"/><circle cx="9.66" cy="2.40" r="0.6" fill="#bde9ef"/><circle cx="12.18" cy="2.40" r="0.6" fill="#bde9ef"/><circle cx="14.70" cy="2.40" r="0.6" fill="#bde9ef"/><circle cx="17.22" cy="2.40" r="0.6" fill="#bde9ef"/><circle cx="2.10" cy="16.20" r="0.6" fill="#bde9ef"/><circle cx="4.62" cy="16.20" r="0.6" fill="#bde9ef"/><circle cx="7.14" cy="16.20" r="0.6" fill="#bde9ef"/><circle cx="9.66" cy="16.20" r="0.6" fill="#bde9ef"/><circle cx="12.18" cy="16.20" r="0.6" fill="#bde9ef"/><circle cx="14.70" cy="16.20" r="0.6" fill="#bde9ef"/><circle cx="17.22" cy="16.20" r="0.6" fill="#bde9ef"/><path d="M9.1 7 L13 9.35 L9.1 11.7Z" fill="#8d6e63"/></svg><span class="c" style="left:254px;width:55px;">18</span><span class="c" style="left:314px;width:195px;">Carousel.MOV</span><span class="c" style="left:514px;width:75px;letter-spacing:-0.3px;">00:00:04....</span><span class="c" style="left:594px;width:65px;">2.29 MB</span><span class="c" style="left:664px;width:105px;">09/12/2017 1...</span><span class="c" style="left:774px;width:105px;">05/16/2018 1...</span><span class="c" style="left:884px;width:45px;letter-spacing:-1.1px;">DOCU</span><span class="c" style="left:934px;width:45px;letter-spacing:-1.1px;">DOCU</span></div>
<div class="row sel" style="top:284px"><span class="cb"><svg width="13" height="13" viewBox="0 0 13 13"><path d="M1.5 6.8 L4.8 10 L11.5 3.2" fill="none" stroke="#3a3a3a" stroke-width="2.6"/></svg></span><span class="gbar"></span><svg class="ic sub" width="16" height="16" viewBox="0 0 16 16"><g fill="#8b4513"><rect x="0" y="0" width="15" height="3"/><rect x="0" y="0" width="1.2" height="13"/><rect x="13.9" y="0" width="1.1" height="4.8"/><rect x="0" y="10" width="4.8" height="3"/><rect x="7.1" y="7" width="8.9" height="8.9"/></g><circle cx="1.40" cy="1.50" r="0.5" fill="#bde9ef"/><circle cx="3.40" cy="1.50" r="0.5" fill="#bde9ef"/><circle cx="5.40" cy="1.50" r="0.5" fill="#bde9ef"/><circle cx="7.40" cy="1.50" r="0.5" fill="#bde9ef"/><circle cx="9.40" cy="1.50" r="0.5" fill="#bde9ef"/><circle cx="11.40" cy="1.50" r="0.5" fill="#bde9ef"/><circle cx="13.40" cy="1.50" r="0.5" fill="#bde9ef"/><circle cx="1.40" cy="11.50" r="0.5" fill="#bde9ef"/><circle cx="3.40" cy="11.50" r="0.5" fill="#bde9ef"/><circle cx="8.80" cy="8.50" r="0.5" fill="#bde9ef"/><circle cx="10.80" cy="8.50" r="0.5" fill="#bde9ef"/><circle cx="12.80" cy="8.50" r="0.5" fill="#bde9ef"/><circle cx="14.60" cy="8.50" r="0.5" fill="#bde9ef"/><circle cx="8.80" cy="14.40" r="0.5" fill="#bde9ef"/><circle cx="10.80" cy="14.40" r="0.5" fill="#bde9ef"/><circle cx="12.80" cy="14.40" r="0.5" fill="#bde9ef"/><circle cx="14.60" cy="14.40" r="0.5" fill="#bde9ef"/><rect x="8.1" y="10" width="6.9" height="2.9" fill="#bde9ef"/><rect x="8.6" y="11.2" width="5.9" height="0.5" fill="#d9b9a3" opacity="0.6"/></svg><svg class="ic video" width="21" height="18" viewBox="0 0 21 18"><rect x="0.5" y="0.7" width="20" height="17" fill="#8d6e63"/><rect x="1.9" y="3.9" width="17" height="10.1" fill="#bde9ef"/><circle cx="2.10" cy="2.40" r="0.6" fill="#bde9ef"/><circle cx="4.62" cy="2.40" r="0.6" fill="#bde9ef"/><circle cx="7.14" cy="2.40" r="0.6" fill="#bde9ef"/><circle cx="9.66" cy="2.40" r="0.6" fill="#bde9ef"/><circle cx="12.18" cy="2.40" r="0.6" fill="#bde9ef"/><circle cx="14.70" cy="2.40" r="0.6" fill="#bde9ef"/><circle cx="17.22" cy="2.40" r="0.6" fill="#bde9ef"/><circle cx="2.10" cy="16.20" r="0.6" fill="#bde9ef"/><circle cx="4.62" cy="16.20" r="0.6" fill="#bde9ef"/><circle cx="7.14" cy="16.20" r="0.6" fill="#bde9ef"/><circle cx="9.66" cy="16.20" r="0.6" fill="#bde9ef"/><circle cx="12.18" cy="16.20" r="0.6" fill="#bde9ef"/><circle cx="14.70" cy="16.20" r="0.6" fill="#bde9ef"/><circle cx="17.22" cy="16.20" r="0.6" fill="#bde9ef"/><path d="M9.1 7 L13 9.35 L9.1 11.7Z" fill="#8d6e63"/></svg><span class="c" style="left:254px;width:55px;">17</span><span class="c" style="left:314px;width:195px;">Seals.MOV</span><span class="c" style="left:514px;width:75px;letter-spacing:-0.3px;">00:00:09....</span><span class="c" style="left:594px;width:65px;">5.47 MB</span><span class="c" style="left:664px;width:105px;">09/12/2017 1...</span><span class="c" style="left:774px;width:105px;">05/16/2018 1...</span><span class="c" style="left:884px;width:45px;letter-spacing:-1.1px;">DOCU</span><span class="c" style="left:934px;width:45px;letter-spacing:-1.1px;">DOCU</span></div>
<div class="row sel" style="top:316px"><span class="cb"><svg width="13" height="13" viewBox="0 0 13 13"><path d="M1.5 6.8 L4.8 10 L11.5 3.2" fill="none" stroke="#3a3a3a" stroke-width="2.6"/></svg></span><span class="gbar"></span><svg class="ic sub" width="16" height="16" viewBox="0 0 16 16"><g fill="#8b4513"><rect x="0" y="0" width="15" height="3"/><rect x="0" y="0" width="1.2" height="13"/><rect x="13.9" y="0" width="1.1" height="4.8"/><rect x="0" y="10" width="4.8" height="3"/><rect x="7.1" y="7" width="8.9" height="8.9"/></g><circle cx="1.40" cy="1.50" r="0.5" fill="#bde9ef"/><circle cx="3.40" cy="1.50" r="0.5" fill="#bde9ef"/><circle cx="5.40" cy="1.50" r="0.5" fill="#bde9ef"/><circle cx="7.40" cy="1.50" r="0.5" fill="#bde9ef"/><circle cx="9.40" cy="1.50" r="0.5" fill="#bde9ef"/><circle cx="11.40" cy="1.50" r="0.5" fill="#bde9ef"/><circle cx="13.40" cy="1.50" r="0.5" fill="#bde9ef"/><circle cx="1.40" cy="11.50" r="0.5" fill="#bde9ef"/><circle cx="3.40" cy="11.50" r="0.5" fill="#bde9ef"/><circle cx="8.80" cy="8.50" r="0.5" fill="#bde9ef"/><circle cx="10.80" cy="8.50" r="0.5" fill="#bde9ef"/><circle cx="12.80" cy="8.50" r="0.5" fill="#bde9ef"/><circle cx="14.60" cy="8.50" r="0.5" fill="#bde9ef"/><circle cx="8.80" cy="14.40" r="0.5" fill="#bde9ef"/><circle cx="10.80" cy="14.40" r="0.5" fill="#bde9ef"/><circle cx="12.80" cy="14.40" r="0.5" fill="#bde9ef"/><circle cx="14.60" cy="14.40" r="0.5" fill="#bde9ef"/><rect x="8.1" y="10" width="6.9" height="2.9" fill="#bde9ef"/><rect x="8.6" y="11.2" width="5.9" height="0.5" fill="#d9b9a3" opacity="0.6"/></svg><svg class="ic video" width="21" height="18" viewBox="0 0 21 18"><rect x="0.5" y="0.7" width="20" height="17" fill="#8d6e63"/><rect x="1.9" y="3.9" width="17" height="10.1" fill="#bde9ef"/><circle cx="2.10" cy="2.40" r="0.6" fill="#bde9ef"/><circle cx="4.62" cy="2.40" r="0.6" fill="#bde9ef"/><circle cx="7.14" cy="2.40" r="0.6" fill="#bde9ef"/><circle cx="9.66" cy="2.40" r="0.6" fill="#bde9ef"/><circle cx="12.18" cy="2.40" r="0.6" fill="#bde9ef"/><circle cx="14.70" cy="2.40" r="0.6" fill="#bde9ef"/><circle cx="17.22" cy="2.40" r="0.6" fill="#bde9ef"/><circle cx="2.10" cy="16.20" r="0.6" fill="#bde9ef"/><circle cx="4.62" cy="16.20" r="0.6" fill="#bde9ef"/><circle cx="7.14" cy="16.20" r="0.6" fill="#bde9ef"/><circle cx="9.66" cy="16.20" r="0.6" fill="#bde9ef"/><circle cx="12.18" cy="16.20" r="0.6" fill="#bde9ef"/><circle cx="14.70" cy="16.20" r="0.6" fill="#bde9ef"/><circle cx="17.22" cy="16.20" r="0.6" fill="#bde9ef"/><path d="M9.1 7 L13 9.35 L9.1 11.7Z" fill="#8d6e63"/></svg><span class="c" style="left:254px;width:55px;">16</span><span class="c" style="left:314px;width:195px;">Antilopes.MOV</span><span class="c" style="left:514px;width:75px;letter-spacing:-0.3px;">00:00:07....</span><span class="c" style="left:594px;width:65px;">13.0 MB</span><span class="c" style="left:664px;width:105px;">09/12/2017 1...</span><span class="c" style="left:774px;width:105px;">05/16/2018 1...</span><span class="c" style="left:884px;width:45px;letter-spacing:-1.1px;">DOCU</span><span class="c" style="left:934px;width:45px;letter-spacing:-1.1px;">DOCU</span></div>
<div class="row" style="top:348px"><span class="gbar"></span><svg class="ic stack" width="21" height="21" viewBox="0 0 21 21"><g fill="#8b4513"><rect x="3" y="0" width="17.6" height="3.7"/><rect x="19" y="0" width="1.6" height="13.6"/><rect x="0" y="5" width="18" height="15"/></g><circle cx="5.50" cy="1.90" r="0.55" fill="#fff"/><circle cx="8.06" cy="1.90" r="0.55" fill="#fff"/><circle cx="10.62" cy="1.90" r="0.55" fill="#fff"/><circle cx="13.18" cy="1.90" r="0.55" fill="#fff"/><circle cx="15.74" cy="1.90" r="0.55" fill="#fff"/><circle cx="18.30" cy="1.90" r="0.55" fill="#fff"/><circle cx="2.30" cy="7.00" r="0.55" fill="#fff"/><circle cx="4.86" cy="7.00" r="0.55" fill="#fff"/><circle cx="7.42" cy="7.00" r="0.55" fill="#fff"/><circle cx="9.98" cy="7.00" r="0.55" fill="#fff"/><circle cx="12.54" cy="7.00" r="0.55" fill="#fff"/><circle cx="15.10" cy="7.00" r="0.55" fill="#fff"/><circle cx="2.30" cy="18.50" r="0.55" fill="#fff"/><circle cx="4.86" cy="18.50" r="0.55" fill="#fff"/><circle cx="7.42" cy="18.50" r="0.55" fill="#fff"/><circle cx="9.98" cy="18.50" r="0.55" fill="#fff"/><circle cx="12.54" cy="18.50" r="0.55" fill="#fff"/><circle cx="15.10" cy="18.50" r="0.55" fill="#fff"/><rect x="1.5" y="8.6" width="15" height="7.9" fill="#fff"/></svg><span class="c" style="left:254px;width:55px;">15</span><span class="c" style="left:314px;width:195px;">Documentation Example</span><span class="c" style="left:514px;width:75px;letter-spacing:-0.3px;">00:03:00....</span><span class="c" style="left:594px;width:65px;">132 KB</span><span class="c" style="left:664px;width:105px;">09/11/2017 1...</span><span class="c" style="left:774px;width:105px;">09/12/2017 1...</span><span class="c" style="left:884px;width:45px;letter-spacing:-1.1px;">DOCU</span><span class="c" style="left:934px;width:45px;letter-spacing:-1.1px;">DOCU</span></div>
<div class="row" style="top:380px"><span class="gbar"></span><svg class="ic stack" width="21" height="21" viewBox="0 0 21 21"><g fill="#8b4513"><rect x="3" y="0" width="17.6" height="3.7"/><rect x="19" y="0" width="1.6" height="13.6"/><rect x="0" y="5" width="18" height="15"/></g><circle cx="5.50" cy="1.90" r="0.55" fill="#fff"/><circle cx="8.06" cy="1.90" r="0.55" fill="#fff"/><circle cx="10.62" cy="1.90" r="0.55" fill="#fff"/><circle cx="13.18" cy="1.90" r="0.55" fill="#fff"/><circle cx="15.74" cy="1.90" r="0.55" fill="#fff"/><circle cx="18.30" cy="1.90" r="0.55" fill="#fff"/><circle cx="2.30" cy="7.00" r="0.55" fill="#fff"/><circle cx="4.86" cy="7.00" r="0.55" fill="#fff"/><circle cx="7.42" cy="7.00" r="0.55" fill="#fff"/><circle cx="9.98" cy="7.00" r="0.55" fill="#fff"/><circle cx="12.54" cy="7.00" r="0.55" fill="#fff"/><circle cx="15.10" cy="7.00" r="0.55" fill="#fff"/><circle cx="2.30" cy="18.50" r="0.55" fill="#fff"/><circle cx="4.86" cy="18.50" r="0.55" fill="#fff"/><circle cx="7.42" cy="18.50" r="0.55" fill="#fff"/><circle cx="9.98" cy="18.50" r="0.55" fill="#fff"/><circle cx="12.54" cy="18.50" r="0.55" fill="#fff"/><circle cx="15.10" cy="18.50" r="0.55" fill="#fff"/><rect x="1.5" y="8.6" width="15" height="7.9" fill="#fff"/></svg><span class="c" style="left:254px;width:55px;">14</span><span class="c" style="left:314px;width:195px;">Documentation Example</span><span class="c" style="left:514px;width:75px;letter-spacing:-0.3px;">00:03:00....</span><span class="c" style="left:594px;width:65px;">132 KB</span><span class="c" style="left:664px;width:105px;">09/11/2017 1...</span><span class="c" style="left:774px;width:105px;">09/12/2017 1...</span><span class="c" style="left:884px;width:45px;letter-spacing:-1.1px;">DOCU</span><span class="c" style="left:934px;width:45px;letter-spacing:-1.1px;">DOCU</span></div>
<div class="row" style="top:412px"><span class="gbar"></span><svg class="ic sub" width="16" height="16" viewBox="0 0 16 16"><g fill="#8b4513"><rect x="0" y="0" width="15" height="3"/><rect x="0" y="0" width="1.2" height="13"/><rect x="13.9" y="0" width="1.1" height="4.8"/><rect x="0" y="10" width="4.8" height="3"/><rect x="7.1" y="7" width="8.9" height="8.9"/></g><circle cx="1.40" cy="1.50" r="0.5" fill="#fff"/><circle cx="3.40" cy="1.50" r="0.5" fill="#fff"/><circle cx="5.40" cy="1.50" r="0.5" fill="#fff"/><circle cx="7.40" cy="1.50" r="0.5" fill="#fff"/><circle cx="9.40" cy="1.50" r="0.5" fill="#fff"/><circle cx="11.40" cy="1.50" r="0.5" fill="#fff"/><circle cx="13.40" cy="1.50" r="0.5" fill="#fff"/><circle cx="1.40" cy="11.50" r="0.5" fill="#fff"/><circle cx="3.40" cy="11.50" r="0.5" fill="#fff"/><circle cx="8.80" cy="8.50" r="0.5" fill="#fff"/><circle cx="10.80" cy="8.50" r="0.5" fill="#fff"/><circle cx="12.80" cy="8.50" r="0.5" fill="#fff"/><circle cx="14.60" cy="8.50" r="0.5" fill="#fff"/><circle cx="8.80" cy="14.40" r="0.5" fill="#fff"/><circle cx="10.80" cy="14.40" r="0.5" fill="#fff"/><circle cx="12.80" cy="14.40" r="0.5" fill="#fff"/><circle cx="14.60" cy="14.40" r="0.5" fill="#fff"/><rect x="8.1" y="10" width="6.9" height="2.9" fill="#fff"/><rect x="8.6" y="11.2" width="5.9" height="0.5" fill="#d9b9a3" opacity="0.6"/></svg><svg class="ic video" width="21" height="18" viewBox="0 0 21 18"><rect x="0.5" y="0.7" width="20" height="17" fill="#8d6e63"/><rect x="1.9" y="3.9" width="17" height="10.1" fill="#fff"/><circle cx="2.10" cy="2.40" r="0.6" fill="#fff"/><circle cx="4.62" cy="2.40" r="0.6" fill="#fff"/><circle cx="7.14" cy="2.40" r="0.6" fill="#fff"/><circle cx="9.66" cy="2.40" r="0.6" fill="#fff"/><circle cx="12.18" cy="2.40" r="0.6" fill="#fff"/><circle cx="14.70" cy="2.40" r="0.6" fill="#fff"/><circle cx="17.22" cy="2.40" r="0.6" fill="#fff"/><circle cx="2.10" cy="16.20" r="0.6" fill="#fff"/><circle cx="4.62" cy="16.20" r="0.6" fill="#fff"/><circle cx="7.14" cy="16.20" r="0.6" fill="#fff"/><circle cx="9.66" cy="16.20" r="0.6" fill="#fff"/><circle cx="12.18" cy="16.20" r="0.6" fill="#fff"/><circle cx="14.70" cy="16.20" r="0.6" fill="#fff"/><circle cx="17.22" cy="16.20" r="0.6" fill="#fff"/><path d="M9.1 7 L13 9.35 L9.1 11.7Z" fill="#8d6e63"/></svg><span class="c" style="left:254px;width:55px;">12</span><span class="c" style="left:314px;width:195px;">Stewed Apricot Manufacturing</span><span class="c" style="left:514px;width:75px;letter-spacing:-0.3px;">00:50:57....</span><span class="c" style="left:594px;width:65px;">21.4 GB</span><span class="c" style="left:664px;width:105px;">07/27/2017 0...</span><span class="c" style="left:774px;width:105px;">09/12/2017 1...</span></div>
<div class="row" style="top:444px"><span class="gbar"></span><svg class="ic sub" width="16" height="16" viewBox="0 0 16 16"><g fill="#8b4513"><rect x="0" y="0" width="15" height="3"/><rect x="0" y="0" width="1.2" height="13"/><rect x="13.9" y="0" width="1.1" height="4.8"/><rect x="0" y="10" width="4.8" height="3"/><rect x="7.1" y="7" width="8.9" height="8.9"/></g><circle cx="1.40" cy="1.50" r="0.5" fill="#fff"/><circle cx="3.40" cy="1.50" r="0.5" fill="#fff"/><circle cx="5.40" cy="1.50" r="0.5" fill="#fff"/><circle cx="7.40" cy="1.50" r="0.5" fill="#fff"/><circle cx="9.40" cy="1.50" r="0.5" fill="#fff"/><circle cx="11.40" cy="1.50" r="0.5" fill="#fff"/><circle cx="13.40" cy="1.50" r="0.5" fill="#fff"/><circle cx="1.40" cy="11.50" r="0.5" fill="#fff"/><circle cx="3.40" cy="11.50" r="0.5" fill="#fff"/><circle cx="8.80" cy="8.50" r="0.5" fill="#fff"/><circle cx="10.80" cy="8.50" r="0.5" fill="#fff"/><circle cx="12.80" cy="8.50" r="0.5" fill="#fff"/><circle cx="14.60" cy="8.50" r="0.5" fill="#fff"/><circle cx="8.80" cy="14.40" r="0.5" fill="#fff"/><circle cx="10.80" cy="14.40" r="0.5" fill="#fff"/><circle cx="12.80" cy="14.40" r="0.5" fill="#fff"/><circle cx="14.60" cy="14.40" r="0.5" fill="#fff"/><rect x="8.1" y="10" width="6.9" height="2.9" fill="#fff"/><rect x="8.6" y="11.2" width="5.9" height="0.5" fill="#d9b9a3" opacity="0.6"/></svg><svg class="ic video" width="21" height="18" viewBox="0 0 21 18"><rect x="0.5" y="0.7" width="20" height="17" fill="#8d6e63"/><rect x="1.9" y="3.9" width="17" height="10.1" fill="#fff"/><circle cx="2.10" cy="2.40" r="0.6" fill="#fff"/><circle cx="4.62" cy="2.40" r="0.6" fill="#fff"/><circle cx="7.14" cy="2.40" r="0.6" fill="#fff"/><circle cx="9.66" cy="2.40" r="0.6" fill="#fff"/><circle cx="12.18" cy="2.40" r="0.6" fill="#fff"/><circle cx="14.70" cy="2.40" r="0.6" fill="#fff"/><circle cx="17.22" cy="2.40" r="0.6" fill="#fff"/><circle cx="2.10" cy="16.20" r="0.6" fill="#fff"/><circle cx="4.62" cy="16.20" r="0.6" fill="#fff"/><circle cx="7.14" cy="16.20" r="0.6" fill="#fff"/><circle cx="9.66" cy="16.20" r="0.6" fill="#fff"/><circle cx="12.18" cy="16.20" r="0.6" fill="#fff"/><circle cx="14.70" cy="16.20" r="0.6" fill="#fff"/><circle cx="17.22" cy="16.20" r="0.6" fill="#fff"/><path d="M9.1 7 L13 9.35 L9.1 11.7Z" fill="#8d6e63"/></svg><span class="c" style="left:254px;width:55px;">11</span><span class="c" style="left:314px;width:195px;">Animations 1920x1080.mxf</span><span class="c" style="left:514px;width:75px;letter-spacing:-0.3px;">00:01:00....</span><span class="c" style="left:594px;width:65px;">428 MB</span><span class="c" style="left:664px;width:105px;">07/18/2017 1...</span><span class="c" style="left:774px;width:105px;">09/12/2017 1...</span><span class="c" style="left:884px;width:45px;letter-spacing:-1.1px;">SR</span><span class="c" style="left:934px;width:45px;letter-spacing:-1.1px;">SR</span></div>
<div class="row" style="top:476px"><span class="gbar"></span><svg class="ic sub" width="16" height="16" viewBox="0 0 16 16"><g fill="#8b4513"><rect x="0" y="0" width="15" height="3"/><rect x="0" y="0" width="1.2" height="13"/><rect x="13.9" y="0" width="1.1" height="4.8"/><rect x="0" y="10" width="4.8" height="3"/><rect x="7.1" y="7" width="8.9" height="8.9"/></g><circle cx="1.40" cy="1.50" r="0.5" fill="#fff"/><circle cx="3.40" cy="1.50" r="0.5" fill="#fff"/><circle cx="5.40" cy="1.50" r="0.5" fill="#fff"/><circle cx="7.40" cy="1.50" r="0.5" fill="#fff"/><circle cx="9.40" cy="1.50" r="0.5" fill="#fff"/><circle cx="11.40" cy="1.50" r="0.5" fill="#fff"/><circle cx="13.40" cy="1.50" r="0.5" fill="#fff"/><circle cx="1.40" cy="11.50" r="0.5" fill="#fff"/><circle cx="3.40" cy="11.50" r="0.5" fill="#fff"/><circle cx="8.80" cy="8.50" r="0.5" fill="#fff"/><circle cx="10.80" cy="8.50" r="0.5" fill="#fff"/><circle cx="12.80" cy="8.50" r="0.5" fill="#fff"/><circle cx="14.60" cy="8.50" r="0.5" fill="#fff"/><circle cx="8.80" cy="14.40" r="0.5" fill="#fff"/><circle cx="10.80" cy="14.40" r="0.5" fill="#fff"/><circle cx="12.80" cy="14.40" r="0.5" fill="#fff"/><circle cx="14.60" cy="14.40" r="0.5" fill="#fff"/><rect x="8.1" y="10" width="6.9" height="2.9" fill="#fff"/><rect x="8.6" y="11.2" width="5.9" height="0.5" fill="#d9b9a3" opacity="0.6"/></svg><svg class="ic video" width="21" height="18" viewBox="0 0 21 18"><rect x="0.5" y="0.7" width="20" height="17" fill="#8d6e63"/><rect x="1.9" y="3.9" width="17" height="10.1" fill="#fff"/><circle cx="2.10" cy="2.40" r="0.6" fill="#fff"/><circle cx="4.62" cy="2.40" r="0.6" fill="#fff"/><circle cx="7.14" cy="2.40" r="0.6" fill="#fff"/><circle cx="9.66" cy="2.40" r="0.6" fill="#fff"/><circle cx="12.18" cy="2.40" r="0.6" fill="#fff"/><circle cx="14.70" cy="2.40" r="0.6" fill="#fff"/><circle cx="17.22" cy="2.40" r="0.6" fill="#fff"/><circle cx="2.10" cy="16.20" r="0.6" fill="#fff"/><circle cx="4.62" cy="16.20" r="0.6" fill="#fff"/><circle cx="7.14" cy="16.20" r="0.6" fill="#fff"/><circle cx="9.66" cy="16.20" r="0.6" fill="#fff"/><circle cx="12.18" cy="16.20" r="0.6" fill="#fff"/><circle cx="14.70" cy="16.20" r="0.6" fill="#fff"/><circle cx="17.22" cy="16.20" r="0.6" fill="#fff"/><path d="M9.1 7 L13 9.35 L9.1 11.7Z" fill="#8d6e63"/></svg><span class="c" style="left:254px;width:55px;">9</span><span class="c" style="left:314px;width:195px;">Tram Stop.mxf</span><span class="c" style="left:514px;width:75px;letter-spacing:-0.3px;">00:00:18....</span><span class="c" style="left:594px;width:65px;">129 MB</span><span class="c" style="left:664px;width:105px;">08/03/2017 1...</span><span class="c" style="left:774px;width:105px;">09/12/2017 1...</span><span class="c" style="left:884px;width:45px;letter-spacing:-0.6px;">CMA...</span><span class="c" style="left:934px;width:45px;letter-spacing:-0.6px;">CMA...</span></div>
<div class="row" style="top:508px"><span class="gbar"></span><svg class="ic sub" width="16" height="16" viewBox="0 0 16 16"><g fill="#8b4513"><rect x="0" y="0" width="15" height="3"/><rect x="0" y="0" width="1.2" height="13"/><rect x="13.9" y="0" width="1.1" height="4.8"/><rect x="0" y="10" width="4.8" height="3"/><rect x="7.1" y="7" width="8.9" height="8.9"/></g><circle cx="1.40" cy="1.50" r="0.5" fill="#fff"/><circle cx="3.40" cy="1.50" r="0.5" fill="#fff"/><circle cx="5.40" cy="1.50" r="0.5" fill="#fff"/><circle cx="7.40" cy="1.50" r="0.5" fill="#fff"/><circle cx="9.40" cy="1.50" r="0.5" fill="#fff"/><circle cx="11.40" cy="1.50" r="0.5" fill="#fff"/><circle cx="13.40" cy="1.50" r="0.5" fill="#fff"/><circle cx="1.40" cy="11.50" r="0.5" fill="#fff"/><circle cx="3.40" cy="11.50" r="0.5" fill="#fff"/><circle cx="8.80" cy="8.50" r="0.5" fill="#fff"/><circle cx="10.80" cy="8.50" r="0.5" fill="#fff"/><circle cx="12.80" cy="8.50" r="0.5" fill="#fff"/><circle cx="14.60" cy="8.50" r="0.5" fill="#fff"/><circle cx="8.80" cy="14.40" r="0.5" fill="#fff"/><circle cx="10.80" cy="14.40" r="0.5" fill="#fff"/><circle cx="12.80" cy="14.40" r="0.5" fill="#fff"/><circle cx="14.60" cy="14.40" r="0.5" fill="#fff"/><rect x="8.1" y="10" width="6.9" height="2.9" fill="#fff"/><rect x="8.6" y="11.2" width="5.9" height="0.5" fill="#d9b9a3" opacity="0.6"/></svg><svg class="ic video" width="21" height="18" viewBox="0 0 21 18"><rect x="0.5" y="0.7" width="20" height="17" fill="#8d6e63"/><rect x="1.9" y="3.9" width="17" height="10.1" fill="#fff"/><circle cx="2.10" cy="2.40" r="0.6" fill="#fff"/><circle cx="4.62" cy="2.40" r="0.6" fill="#fff"/><circle cx="7.14" cy="2.40" r="0.6" fill="#fff"/><circle cx="9.66" cy="2.40" r="0.6" fill="#fff"/><circle cx="12.18" cy="2.40" r="0.6" fill="#fff"/><circle cx="14.70" cy="2.40" r="0.6" fill="#fff"/><circle cx="17.22" cy="2.40" r="0.6" fill="#fff"/><circle cx="2.10" cy="16.20" r="0.6" fill="#fff"/><circle cx="4.62" cy="16.20" r="0.6" fill="#fff"/><circle cx="7.14" cy="16.20" r="0.6" fill="#fff"/><circle cx="9.66" cy="16.20" r="0.6" fill="#fff"/><circle cx="12.18" cy="16.20" r="0.6" fill="#fff"/><circle cx="14.70" cy="16.20" r="0.6" fill="#fff"/><circle cx="17.22" cy="16.20" r="0.6" fill="#fff"/><path d="M9.1 7 L13 9.35 L9.1 11.7Z" fill="#8d6e63"/></svg><span class="c" style="left:254px;width:55px;">8</span><span class="c" style="left:314px;width:195px;">Rendered Video from Rough...</span><span class="c" style="left:514px;width:75px;letter-spacing:-0.3px;">00:00:11....</span><span class="c" style="left:594px;width:65px;">78.5 MB</span><span class="c" style="left:664px;width:105px;">06/28/2017 1...</span><span class="c" style="left:774px;width:105px;">09/12/2017 1...</span><span class="c" style="left:884px;width:45px;letter-spacing:-0.6px;">CMA...</span><span class="c" style="left:934px;width:45px;letter-spacing:-0.6px;">CMA...</span></div>
<div class="row" style="top:540px"><span class="gbar"></span><svg class="ic sub" width="16" height="16" viewBox="0 0 16 16"><g fill="#8b4513"><rect x="0" y="0" width="15" height="3"/><rect x="0" y="0" width="1.2" height="13"/><rect x="13.9" y="0" width="1.1" height="4.8"/><rect x="0" y="10" width="4.8" height="3"/><rect x="7.1" y="7" width="8.9" height="8.9"/></g><circle cx="1.40" cy="1.50" r="0.5" fill="#fff"/><circle cx="3.40" cy="1.50" r="0.5" fill="#fff"/><circle cx="5.40" cy="1.50" r="0.5" fill="#fff"/><circle cx="7.40" cy="1.50" r="0.5" fill="#fff"/><circle cx="9.40" cy="1.50" r="0.5" fill="#fff"/><circle cx="11.40" cy="1.50" r="0.5" fill="#fff"/><circle cx="13.40" cy="1.50" r="0.5" fill="#fff"/><circle cx="1.40" cy="11.50" r="0.5" fill="#fff"/><circle cx="3.40" cy="11.50" r="0.5" fill="#fff"/><circle cx="8.80" cy="8.50" r="0.5" fill="#fff"/><circle cx="10.80" cy="8.50" r="0.5" fill="#fff"/><circle cx="12.80" cy="8.50" r="0.5" fill="#fff"/><circle cx="14.60" cy="8.50" r="0.5" fill="#fff"/><circle cx="8.80" cy="14.40" r="0.5" fill="#fff"/><circle cx="10.80" cy="14.40" r="0.5" fill="#fff"/><circle cx="12.80" cy="14.40" r="0.5" fill="#fff"/><circle cx="14.60" cy="14.40" r="0.5" fill="#fff"/><rect x="8.1" y="10" width="6.9" height="2.9" fill="#fff"/><rect x="8.6" y="11.2" width="5.9" height="0.5" fill="#d9b9a3" opacity="0.6"/></svg><svg class="ic video" width="21" height="18" viewBox="0 0 21 18"><rect x="0.5" y="0.7" width="20" height="17" fill="#8d6e63"/><rect x="1.9" y="3.9" width="17" height="10.1" fill="#fff"/><circle cx="2.10" cy="2.40" r="0.6" fill="#fff"/><circle cx="4.62" cy="2.40" r="0.6" fill="#fff"/><circle cx="7.14" cy="2.40" r="0.6" fill="#fff"/><circle cx="9.66" cy="2.40" r="0.6" fill="#fff"/><circle cx="12.18" cy="2.40" r="0.6" fill="#fff"/><circle cx="14.70" cy="2.40" r="0.6" fill="#fff"/><circle cx="17.22" cy="2.40" r="0.6" fill="#fff"/><circle cx="2.10" cy="16.20" r="0.6" fill="#fff"/><circle cx="4.62" cy="16.20" r="0.6" fill="#fff"/><circle cx="7.14" cy="16.20" r="0.6" fill="#fff"/><circle cx="9.66" cy="16.20" r="0.6" fill="#fff"/><circle cx="12.18" cy="16.20" r="0.6" fill="#fff"/><circle cx="14.70" cy="16.20" r="0.6" fill="#fff"/><circle cx="17.22" cy="16.20" r="0.6" fill="#fff"/><path d="M9.1 7 L13 9.35 L9.1 11.7Z" fill="#8d6e63"/></svg><span class="c" style="left:254px;width:55px;">7</span><span class="c" style="left:314px;width:195px;">Bridge across the Isar</span><span class="c" style="left:514px;width:75px;letter-spacing:-0.3px;">00:00:31....</span><span class="c" style="left:594px;width:65px;">198 MB</span><span class="c" style="left:664px;width:105px;">09/04/2017 1...</span><span class="c" style="left:774px;width:105px;">09/12/2017 1...</span><span class="c" style="left:884px;width:45px;letter-spacing:-0.6px;">CMA...</span><span class="c" style="left:934px;width:45px;letter-spacing:-0.6px;">CMA...</span></div>
<div class="row" style="top:572px"><span class="gbar"></span><svg class="ic stack" width="21" height="21" viewBox="0 0 21 21"><g fill="#8b4513"><rect x="3" y="0" width="17.6" height="3.7"/><rect x="19" y="0" width="1.6" height="13.6"/><rect x="0" y="5" width="18" height="15"/></g><circle cx="5.50" cy="1.90" r="0.55" fill="#fff"/><circle cx="8.06" cy="1.90" r="0.55" fill="#fff"/><circle cx="10.62" cy="1.90" r="0.55" fill="#fff"/><circle cx="13.18" cy="1.90" r="0.55" fill="#fff"/><circle cx="15.74" cy="1.90" r="0.55" fill="#fff"/><circle cx="18.30" cy="1.90" r="0.55" fill="#fff"/><circle cx="2.30" cy="7.00" r="0.55" fill="#fff"/><circle cx="4.86" cy="7.00" r="0.55" fill="#fff"/><circle cx="7.42" cy="7.00" r="0.55" fill="#fff"/><circle cx="9.98" cy="7.00" r="0.55" fill="#fff"/><circle cx="12.54" cy="7.00" r="0.55" fill="#fff"/><circle cx="15.10" cy="7.00" r="0.55" fill="#fff"/><circle cx="2.30" cy="18.50" r="0.55" fill="#fff"/><circle cx="4.86" cy="18.50" r="0.55" fill="#fff"/><circle cx="7.42" cy="18.50" r="0.55" fill="#fff"/><circle cx="9.98" cy="18.50" r="0.55" fill="#fff"/><circle cx="12.54" cy="18.50" r="0.55" fill="#fff"/><circle cx="15.10" cy="18.50" r="0.55" fill="#fff"/><rect x="1.5" y="8.6" width="15" height="7.9" fill="#fff"/></svg><span class="c" style="left:254px;width:55px;">6</span><span class="c" style="left:314px;width:195px;">Flying in the trees</span><span class="c" style="left:514px;width:75px;letter-spacing:-0.3px;">00:00:00....</span><span class="c" style="left:594px;width:65px;">1.14 KB</span><span class="c" style="left:664px;width:105px;">09/08/2017 1...</span><span class="c" style="left:774px;width:105px;">09/08/2017 1...</span><span class="c" style="left:884px;width:45px;letter-spacing:-1.1px;">DOCU</span><span class="c" style="left:934px;width:45px;letter-spacing:-1.1px;">DOCU</span></div>
<div class="row" style="top:604px"><span class="gbar"></span><svg class="ic speaker" width="22" height="18" viewBox="0 0 22 18"><path d="M0.2 5.1 H4.8 L10.9 0 V17 L4.8 12.1 H0.2Z" fill="#0066ff"/><path d="M13.4 3.6 A5.1 5.1 0 0 1 13.4 13.2" fill="none" stroke="#0066ff" stroke-width="1.3"/><path d="M15.8 1.3 A8.3 8.3 0 0 1 15.8 16" fill="none" stroke="#0066ff" stroke-width="1.3"/></svg><span class="c" style="left:254px;width:55px;">5</span><span class="c" style="left:314px;width:195px;">New Entry from 40 subclips</span><span class="c" style="left:514px;width:75px;letter-spacing:-0.3px;">00:06:18....</span><span class="c" style="left:594px;width:65px;">5.77 MB</span><span class="c" style="left:664px;width:105px;">08/28/2017 1...</span><span class="c" style="left:774px;width:105px;">05/14/2018 1...</span></div>
<div class="row" style="top:636px"><span class="gbar"></span><svg class="ic note" width="19" height="20" viewBox="0 0 19 20"><g fill="#5b8def"><ellipse cx="3.9" cy="15.8" rx="3" ry="2.4"/><ellipse cx="15.1" cy="13.2" rx="3" ry="2.4"/><path d="M6.1 3.4 L18.6 0 V13.2 H17 V2.3 L7.5 5 V15.6 H6.1Z"/></g></svg><span class="c" style="left:254px;width:55px;">4</span><span class="c" style="left:314px;width:195px;">New Entry from Steve Smith</span><span class="c" style="left:514px;width:75px;letter-spacing:-0.3px;">00:00:52....</span><span class="c" style="left:594px;width:65px;">816 KB</span><span class="c" style="left:664px;width:105px;">08/28/2017 1...</span><span class="c" style="left:774px;width:105px;">08/28/2017 1...</span></div>
<div class="row" style="top:668px"><span class="gbar"></span><svg class="ic note" width="19" height="20" viewBox="0 0 19 20"><g fill="#5b8def"><ellipse cx="3.9" cy="15.8" rx="3" ry="2.4"/><ellipse cx="15.1" cy="13.2" rx="3" ry="2.4"/><path d="M6.1 3.4 L18.6 0 V13.2 H17 V2.3 L7.5 5 V15.6 H6.1Z"/></g></svg><span class="c" style="left:254px;width:55px;">3</span><span class="c" style="left:314px;width:195px;">Steve Smith</span><span class="c" style="left:514px;width:75px;letter-spacing:-0.3px;">00:01:17....</span><span class="c" style="left:594px;width:65px;">2.36 MB</span><span class="c" style="left:664px;width:105px;">11/24/1994 1...</span><span class="c" style="left:774px;width:105px;">08/28/2017 1...</span></div>
<div class="row" style="top:700px"><span class="gbar"></span><svg class="ic note" width="19" height="20" viewBox="0 0 19 20"><g fill="#5b8def"><ellipse cx="3.9" cy="15.8" rx="3" ry="2.4"/><ellipse cx="15.1" cy="13.2" rx="3" ry="2.4"/><path d="M6.1 3.4 L18.6 0 V13.2 H17 V2.3 L7.5 5 V15.6 H6.1Z"/></g></svg><span class="c" style="left:254px;width:55px;">2</span><span class="c" style="left:314px;width:195px;">Steve Smith</span><span class="c" style="left:514px;width:75px;letter-spacing:-0.3px;">00:01:17....</span><span class="c" style="left:594px;width:65px;">2.36 MB</span><span class="c" style="left:664px;width:105px;">11/24/1994 1...</span><span class="c" style="left:774px;width:105px;">08/28/2017 1...</span></div>
<div class="row" style="top:732px"><span class="gbar"></span><svg class="ic speaker" width="22" height="18" viewBox="0 0 22 18"><path d="M0.2 5.1 H4.8 L10.9 0 V17 L4.8 12.1 H0.2Z" fill="#0066ff"/><path d="M13.4 3.6 A5.1 5.1 0 0 1 13.4 13.2" fill="none" stroke="#0066ff" stroke-width="1.3"/><path d="M15.8 1.3 A8.3 8.3 0 0 1 15.8 16" fill="none" stroke="#0066ff" stroke-width="1.3"/></svg><svg class="ic checkg" width="20" height="14" viewBox="0 0 20 14"><path d="M0.9 6.8 L6.4 12.2 L18.8 0.8" fill="none" stroke="#2ecc40" stroke-width="1.6"/></svg><span class="c" style="left:254px;width:55px;">1</span><span class="c" style="left:314px;width:195px;">40 subclips</span><span class="c" style="left:514px;width:75px;letter-spacing:-0.3px;">00:03:30....</span><span class="c" style="left:594px;width:65px;">4.56 MB</span><span class="c" style="left:664px;width:105px;">08/09/2017 1...</span><span class="c" style="left:774px;width:105px;">08/28/2017 1...</span><span class="c" style="left:884px;width:45px;letter-spacing:-1.1px;">VBO2</span><span class="c" style="left:934px;width:45px;letter-spacing:-1.1px;">VBO2</span></div>
</div>

<div id="footer">
  <span class="abs" style="left:41px;top:10px;line-height:16px">1 - 48 of 48 (6 selected)</span>
  <div class="abs" style="left:219px;top:4px;width:1px;height:28px;background:#ddd"></div>
  <svg class="abs" style="left:1431px;top:13px" width="11" height="11" viewBox="0 0 11 11"><path d="M0.7 0 V11 M9 1.5 L5 5.5 L9 9.5" fill="none" stroke="#bbb" stroke-width="1.1"/></svg>
  <svg class="abs" style="left:1457px;top:13px" width="8" height="11" viewBox="0 0 8 11"><path d="M6 1.5 L2 5.5 L6 9.5" fill="none" stroke="#bbb" stroke-width="1.1"/></svg>
  <div class="abs" style="left:1474px;top:6px;width:32px;height:25px;border:1px solid #ddd;border-radius:4px;background:#fff;text-align:center;line-height:23px">1</div>
  <span class="abs" style="left:1513px;top:10px;line-height:16px">/</span><span class="abs" style="left:1525px;top:10px;line-height:16px">1</span>
  <svg class="abs" style="left:1550px;top:13px" width="8" height="11" viewBox="0 0 8 11"><path d="M2 1.5 L6 5.5 L2 9.5" fill="none" stroke="#bbb" stroke-width="1.1"/></svg>
  <svg class="abs" style="left:1573px;top:13px" width="11" height="11" viewBox="0 0 11 11"><path d="M10.3 0 V11 M2 1.5 L6 5.5 L2 9.5" fill="none" stroke="#bbb" stroke-width="1.1"/></svg>
  <div class="abs" style="left:1630px;top:0;width:1px;height:36px;background:#ddd"></div>
  <svg class="abs" style="left:1648.5px;top:12.5px" width="12" height="12" viewBox="0 0 13 13"><g fill="#333"><circle cx="6.5" cy="6.5" r="4.6"/><g transform="translate(6.5 6.5)"><rect x="-1.3" y="-6.5" width="2.6" height="13"/><rect x="-1.3" y="-6.5" width="2.6" height="13" transform="rotate(45)"/><rect x="-1.3" y="-6.5" width="2.6" height="13" transform="rotate(90)"/><rect x="-1.3" y="-6.5" width="2.6" height="13" transform="rotate(135)"/></g></g><circle cx="6.5" cy="6.5" r="2" fill="#f7f7f7"/></svg>
</div>

<div id="dstrip"><div class="line"></div><span class="vtext" style="left:18px;top:46px;color:#555">Details</span></div>

<div id="dd">
  <div class="def"></div>
  <span class="mi" style="top:14px;color:#fff;line-height:16px;-webkit-text-stroke:0.15px #fff">Default</span>
  <span class="mi" style="top:58px;line-height:16px;letter-spacing:-0.3px">MR_Print</span>
  <span class="mi" style="top:102px;line-height:16px">Sp.template</span>
  <span class="mi" style="top:146px;line-height:16px">Bad config</span>
</div>

<svg class="abs" style="left:318.5px;top:58.5px" width="19" height="25" viewBox="-0.5 -0.5 19 25"><path d="M5.6 1.8 Q5.6 0.3 6.95 0.3 Q8.3 0.3 8.3 1.8 V6.5 Q8.3 5.3 9.85 5.3 Q11.4 5.3 11.4 6.8 Q11.4 5.8 12.9 5.8 Q14.4 5.8 14.4 7.3 Q14.4 6.6 15.95 6.6 Q17.5 6.6 17.5 8.2 V16 Q17.5 23 11 23 Q7.5 23 5 19.5 L0.7 14.3 Q0.1 13.2 1.2 12.6 Q2.6 12 4 13.4 L5.6 15 Z" fill="#fff" stroke="#111" stroke-width="1.1" stroke-linejoin="round"/><path d="M8.3 6.3 V10.5 M11.4 6.6 V10.5 M14.4 7.1 V10.5" stroke="#111" stroke-width="1"/></svg>
</body></html>
